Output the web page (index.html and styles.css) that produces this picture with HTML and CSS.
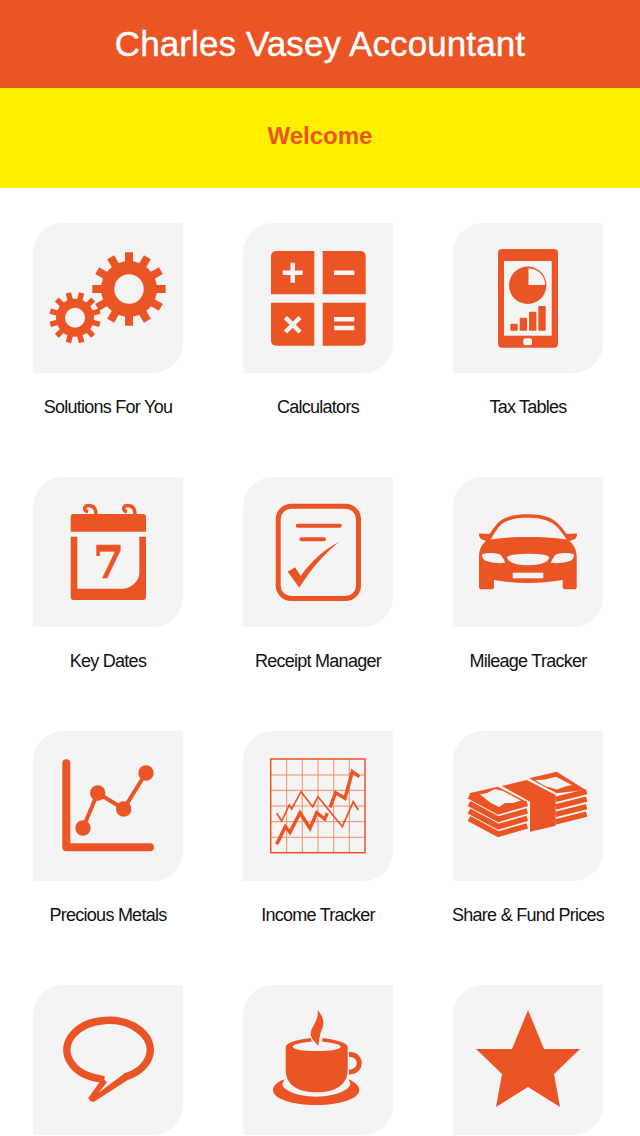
FILE: index.html
```html
<!DOCTYPE html>
<html lang="en">
<head>
    <meta charset="UTF-8">
    <meta name="viewport" content="width=device-width, initial-scale=1.0">
    <title>Charles Vasey Accountant</title>
    <link rel="stylesheet" href="styles.css">
</head>
<body>
    <div class="page">
        <header class="top-bar">Charles Vasey Accountant</header>
        <div class="welcome-bar">Welcome</div>

        <div class="menu">
            <div class="item">
                <div class="tile">
                    <svg class="icon" viewBox="0 0 150 150">
                        <path class="teeth big" d="M96 29.3V102.7M59.3 66H132.7M114.35 34.2L77.65 97.8M127.8 47.65L64.2 84.35M127.8 84.35L64.2 47.65M114.35 97.8L77.65 34.2"/>
                        <circle cx="96" cy="66" r="28"/>
                        <circle class="hole" cx="96" cy="66" r="14.7"/>
                        <path class="teeth small" d="M48.65 69.9L35.35 119.5M60.17 76.53L23.83 112.87M66.8 88.05L17.2 101.35M66.8 101.35L17.2 88.05M60.17 112.87L23.83 76.53M48.65 119.5L35.35 69.9"/>
                        <circle cx="42" cy="94.7" r="19"/>
                        <circle class="hole" cx="42" cy="94.7" r="10"/>
                    </svg>
                </div>
                <div class="label">Solutions For You</div>
            </div>

            <div class="item">
                <div class="tile">
                    <svg class="icon" viewBox="0 0 150 150">
                        <path d="M33 28H71.3V71.3H28V33A5 5 0 0 1 33 28Z"/>
                        <path d="M79.7 28H117.7A5 5 0 0 1 122.7 33V71.3H79.7Z"/>
                        <path d="M28 79.7H71.3V122.7H33A5 5 0 0 1 28 117.7Z"/>
                        <path d="M79.7 79.7H122.7V117.7A5 5 0 0 1 117.7 122.7H79.7Z"/>
                        <path class="sign" d="M39.7 49.7H59.7M49.7 39.7V59.7M91 49.7H111.3M42.5 94.5L57 109M57 94.5L42.5 109M91 96.3H111.3M91 105H111.3"/>
                    </svg>
                </div>
                <div class="label">Calculators</div>
            </div>

            <div class="item">
                <div class="tile">
                    <svg class="icon" viewBox="0 0 150 150">
                        <rect x="45" y="26" width="60" height="98.7" rx="4"/>
                        <rect class="hole" x="51" y="38" width="47.7" height="74.7"/>
                        <rect class="hole" x="70.3" y="115.2" width="8.7" height="7" rx="2"/>
                        <circle cx="74.7" cy="62.3" r="18.7"/>
                        <path class="hole" d="M75.5 45.2A17.2 17.2 0 0 1 92.2 62H75.5Z"/>
                        <rect x="57.3" y="100.7" width="7.4" height="7" rx="1"/>
                        <rect x="66.7" y="94.7" width="7.4" height="13" rx="1"/>
                        <rect x="76" y="88.7" width="7.4" height="19" rx="1"/>
                        <rect x="85.3" y="83" width="7.4" height="24.7" rx="1"/>
                    </svg>
                </div>
                <div class="label">Tax Tables</div>
            </div>

            <div class="item">
                <div class="tile">
                    <svg class="icon" viewBox="0 0 150 150">
                        <path d="M40.7 37H110A3 3 0 0 1 113 40V54.7H37.7V40A3 3 0 0 1 40.7 37Z"/>
                        <path d="M37.7 59.7H44.3V111.7H90.3C98 111.7 106.3 104 106.3 96.3V59.7H113V120A3 3 0 0 1 110 123H40.7A3 3 0 0 1 37.7 120Z"/>
                        <path class="ring" d="M55 35C50 33 51 28.500 56 28.500C60.500 28.500 63 32 63 38M94 35C89 33 90 28.500 95 28.500C99.500 28.500 102 32 102 38"/>
                        <text class="digit" x="75.500" y="101">7</text>
                    </svg>
                </div>
                <div class="label">Key Dates</div>
            </div>

            <div class="item">
                <div class="tile">
                    <svg class="icon" viewBox="0 0 150 150">
                        <rect class="outline" x="35.200" y="29.200" width="80.300" height="92.300" rx="13"/>
                        <path class="round-line" d="M54.700 48.700H96.700M58.300 62.300H81"/>
                        <path d="M44.700 94.700L52 90.300L57.700 99C68 84 82 72 96.300 64.700C80 78 68 92 56.300 110.700Z"/>
                    </svg>
                </div>
                <div class="label">Receipt Manager</div>
            </div>

            <div class="item">
                <div class="tile">
                    <svg class="icon" viewBox="0 0 150 150">
                        <path d="M36.500 57C41 50 46 44 50 42C58 38 66 37.300 74.300 37.300C83 37.300 91 38 99 42C103 44 109 50 113.500 57L123 56.500C125 56.500 124 60 122 62L116.500 64C120 67 123.700 72 123.700 80V110C123.700 111.500 122.500 112.300 121 112.300H112.500C111 112.300 109.700 111.500 109.700 110V103C98 105 86 106 74.300 106C63 106 52 105 41 103V110C41 111.500 40 112.300 38.500 112.300H28.500C27 112.300 26 111.500 26 110V80C26 72 29 67 33 64L28 62C26 60 25 56.500 27 56.500Z"/>
                        <path class="hole" d="M37.700 62.500C42 55 46 49 50 46C58 41.500 66 40.700 74.300 40.700C83 40.700 91 41.500 99 46C104 49 109 55 113.700 62.500C100 60.500 88 60 74.300 60C62 60 50 60.500 37.700 62.500Z"/>
                        <path class="hole" d="M29.500 77C34 75.500 41 75.500 46 77C49 78.500 51.500 83 52 86C44 86.500 36 85.500 32 83.500C30 82 28.500 79 29.500 77Z"/>
                        <path class="hole" d="M120.500 77C116 75.500 109 75.500 104 77C101 78.500 98.500 83 98 86C106 86.500 114 85.500 118 83.500C120 82 121.500 79 120.500 77Z"/>
                        <path class="hole" d="M54 80C56 78 64 76.800 75 76.800C86 76.800 94 78 96.300 80C96 84 90 88.300 75 88.300C60 88.300 54.500 84 54 80Z"/>
                        <rect class="hole" x="59.700" y="95.700" width="30.600" height="5.600"/>
                    </svg>
                </div>
                <div class="label">Mileage Tracker</div>
            </div>

            <div class="item">
                <div class="tile">
                    <svg class="icon" viewBox="0 0 150 150">
                        <path class="axis" d="M33.300 32.300V116.300H117"/>
                        <path class="chart-line" d="M50 97L64.700 62L90.700 78L113 42"/>
                        <circle cx="50" cy="97" r="7.700"/>
                        <circle cx="64.700" cy="62" r="7.700"/>
                        <circle cx="90.700" cy="78" r="7.700"/>
                        <circle cx="113" cy="42" r="7.700"/>
                    </svg>
                </div>
                <div class="label">Precious Metals</div>
            </div>

            <div class="item">
                <div class="tile">
                    <svg class="icon" viewBox="0 0 150 150">
                        <path class="grid-line" d="M43.700 28V121.700M59.300 28V121.700M75 28V121.700M90.700 28V121.700M106.300 28V121.700M27.700 44H122M27.700 59.300H122M27.700 75H122M27.700 90.700H122M27.700 106.300H122"/>
                        <rect class="frame" x="27.700" y="28" width="94.300" height="93.700"/>
                        <path class="thin-trace" d="M33.700 82.300L38.700 90L46.300 74L48.700 78L58 60.700L69.700 75.700L75 65.700L99.300 95.700L110.300 70.700L115.300 79"/>
                        <path class="thick-trace" d="M33.700 113.300L42.300 95.700L47 101.300L57 81.700L67 97.300L73.700 81.700L81.700 88L84.300 82.300M87 76.300L92.700 61.700L102 67.300L109.300 40.700L116.300 45.700"/>
                    </svg>
                </div>
                <div class="label">Income Tracker</div>
            </div>

            <div class="item">
                <div class="tile">
                    <svg class="icon" viewBox="0 0 150 150">
                        <path class="stripe" d="M16 65L45.300 80.700L74.300 72.300M16 72.500L45.300 88.200L74.300 79.800M16 80L45.300 95.700L74.300 87.300M16 87.500L45.300 103.200L74.300 94.800M102.700 68.300L133.700 60.700M102.700 75.800L133.700 68.200M102.700 83.300L133.700 75.700M102.700 90.800L133.700 83.200"/>
                        <path d="M16 62.300L44.700 55.700L73.700 70.700L45.300 79Z"/>
                        <path class="hole" d="M27 63.500L34 62L42 58L50 60L68 69.500L60 72L52 72L46 76L38 72Z"/>
                        <path d="M76 47.300L103.700 40.700L132.700 59L103.700 62.300Z"/>
                        <path class="hole" d="M82 49L92 48.500L103 45.700L119 54L112 55.500L104 58.500L92 55Z"/>
                        <path d="M48.700 55L73.700 49L102.700 64V94.700L77 100.700V70.700Z"/>
                    </svg>
                </div>
                <div class="label">Share &amp; Fund Prices</div>
            </div>

            <div class="item">
                <div class="tile">
                    <svg class="icon" viewBox="0 0 150 150">
                        <path class="bubble" d="M92 92A41.700 29.500 0 1 0 66 93.600L71 95"/>
                        <path d="M70 93L74 97.500L65.300 108L92 88L94 95.500L61 116.700Q57 117.500 55.300 113L68 95Z"/>
                    </svg>
                </div>
            </div>

            <div class="item">
                <div class="tile">
                    <svg class="icon" viewBox="0 0 150 150">
                        <path d="M42.700 62C42.700 58 54 54.500 67.500 53L69 56.500C58 57.500 49.700 59.500 49.700 61.700C49.700 64.500 60 66 73.700 66C87 66 97.700 64.500 97.700 61.700C97.700 59.500 89 57.500 79 56.500L79.500 53C93 54.500 104.700 58 104.700 62V85C104.700 100 92 107.300 73.700 107.300C55 107.300 42.700 100 42.700 85Z"/>
                        <path d="M74.700 25C80 31 82 38 79 44C77 49 76 54 75.300 60.700C71 56 67 52 67.700 48C68 42 76 36 74.700 25Z"/>
                        <path class="handle" d="M106 69.500H107.500A8.700 8.700 0 0 1 107.500 86.900H106"/>
                        <path d="M41.300 94.300C34 97 30 101 30 105C30 114 50 120 73 120C96 120 116.300 114 116.300 105C116.300 101 112 97 105.300 94.300L107 97.500C110 103 94 111.700 73.500 111.700C52 111.700 36 103 40 97.500Z"/>
                    </svg>
                </div>
            </div>

            <div class="item">
                <div class="tile">
                    <svg class="icon" viewBox="0 0 150 150">
                        <path d="M75 25L91 64H127L101 89L107 122L75 102L43 122L49 89L23 64H59Z"/>
                    </svg>
                </div>
            </div>
        </div>
    </div>
</body>
</html>
```

FILE: styles.css
```css
html, body {
    margin: 0;
    padding: 0;
    background: #fff;
}
.page {
    height: 1136px;
    overflow: hidden;
    font-family: "Liberation Sans", Arial, sans-serif;
}
.top-bar {
    height: 88px;
    line-height: 88px;
    background-color: #eb5424;
    color: #fff;
    font-size: 35px;
    letter-spacing: 0.1px;
    -webkit-text-stroke: 0.4px #fff;
    text-align: center;
}
.welcome-bar {
    height: 100px;
    line-height: 96px;
    background-color: #fff000;
    color: #eb5424;
    font-size: 24px;
    font-weight: bold;
    text-align: center;
}
.menu {
    display: grid;
    grid-template-columns: repeat(3, 150px);
    column-gap: 60px;
    row-gap: 58px;
    padding: 35px 33px 0;
}
.item {
    display: flex;
    flex-direction: column;
    align-items: center;
}
.tile {
    width: 150px;
    height: 150px;
    background-color: #f4f4f4;
    border-radius: 30px 0 30px 0;
}
.label {
    margin-top: 22px;
    height: 24px;
    line-height: 24px;
    font-size: 18px;
    letter-spacing: -0.75px;
    color: #111;
    white-space: nowrap;
}
.icon {
    display: block;
    width: 150px;
    height: 150px;
    fill: #eb5424;
}
.icon .hole {
    fill: #f4f4f4;
}
.teeth, .sign, .ring, .outline, .round-line, .axis, .chart-line, .grid-line, .frame, .thin-trace, .thick-trace, .stripe, .bubble, .handle {
    fill: none;
    stroke: #eb5424;
}
.teeth.big { stroke-width: 8; }
.teeth.small { stroke-width: 5.5; }
.sign {
    stroke: #f4f4f4;
    stroke-width: 4.5;
}
.ring { stroke-width: 3.5; }
.digit {
    font-family: "DejaVu Serif", serif;
    font-size: 44px;
    font-weight: bold;
    text-anchor: middle;
    stroke: #eb5424;
    stroke-width: 0.6;
}
.outline { stroke-width: 5; }
.round-line {
    stroke-width: 4;
    stroke-linecap: round;
}
.axis {
    stroke-width: 8;
    stroke-linecap: round;
    stroke-linejoin: round;
}
.chart-line { stroke-width: 4; }
.grid-line {
    stroke: #f08e68;
    stroke-width: 1;
}
.frame { stroke-width: 1.5; }
.thin-trace { stroke-width: 1.7; }
.thick-trace { stroke-width: 3.5; }
.stripe { stroke-width: 5.5; }
.bubble { stroke-width: 7.5; }
.handle { stroke-width: 5; }
```
